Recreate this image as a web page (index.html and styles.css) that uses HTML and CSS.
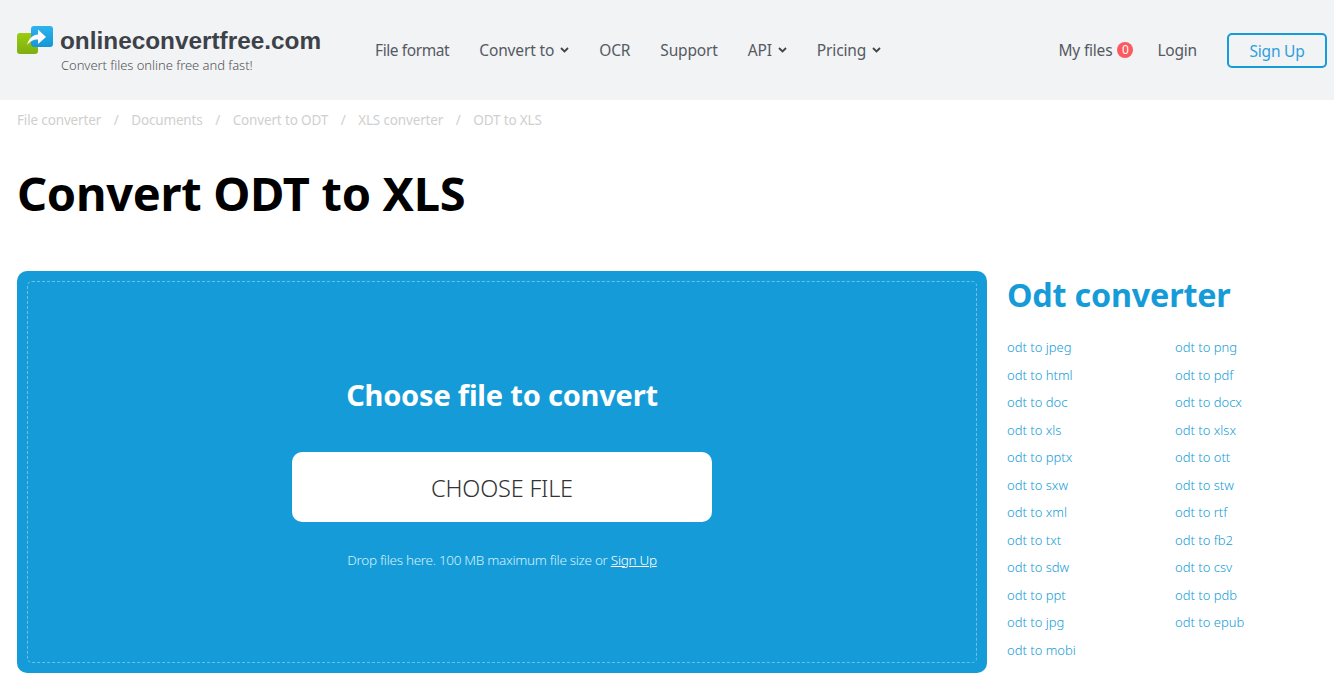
FILE: index.html
```html
<!DOCTYPE html>
<html lang="en">
<head>
<meta charset="utf-8">
<title>Convert ODT to XLS</title>
<link rel="stylesheet" href="styles.css">
</head>
<body>
<header class="header">
  <a class="brand" href="#">
    <svg class="logo" width="36" height="29" viewBox="0 0 36 29">
      <defs>
        <linearGradient id="g" x1="0" y1="0" x2="0" y2="1"><stop offset="0" stop-color="#9ccc10"/><stop offset="1" stop-color="#7fae12"/></linearGradient>
        <linearGradient id="b" x1="0" y1="0" x2="0" y2="1"><stop offset="0" stop-color="#2db4ee"/><stop offset="1" stop-color="#1496d6"/></linearGradient>
      </defs>
      <rect x="0" y="7" width="21" height="21" rx="3" fill="url(#g)"/>
      <rect x="14" y="0" width="22" height="21" rx="3" fill="url(#b)"/>
      <path d="M10 19 C12 12 16 9 21 8.5 V3.5 L29 11 L21 18 V13.5 C16 13.5 13 15.5 10 19 Z" fill="#fff"/>
    </svg>
    <span class="brand-text">
      <span class="brand-name">onlineconvertfree.com</span>
      <span class="brand-tag">Convert files online free and fast!</span>
    </span>
  </a>
  <nav class="nav">
    <a href="#">File format</a>
    <a href="#">Convert to <svg class="chev" width="9" height="6" viewBox="0 0 9 6"><path d="M1 1 4.5 4.5 8 1" fill="none" stroke="#444" stroke-width="1.8"/></svg></a>
    <a href="#">OCR</a>
    <a href="#">Support</a>
    <a href="#">API <svg class="chev" width="9" height="6" viewBox="0 0 9 6"><path d="M1 1 4.5 4.5 8 1" fill="none" stroke="#444" stroke-width="1.8"/></svg></a>
    <a href="#">Pricing <svg class="chev" width="9" height="6" viewBox="0 0 9 6"><path d="M1 1 4.5 4.5 8 1" fill="none" stroke="#444" stroke-width="1.8"/></svg></a>
  </nav>
  <div class="account">
    <a class="files" href="#">My files <span class="badge">0</span></a>
    <a href="#">Login</a>
    <a class="signup" href="#">Sign Up</a>
  </div>
</header>
<ol class="crumbs">
  <li>File converter</li><li>Documents</li><li>Convert to ODT</li><li>XLS converter</li><li>ODT to XLS</li>
</ol>
<h1 class="title">Convert ODT to XLS</h1>
<main class="main">
  <section class="drop">
    <div class="drop-inner">
      <h2 class="drop-title">Choose file to convert</h2>
      <button class="choose">CHOOSE FILE</button>
      <p class="drop-note">Drop files here. 100 MB maximum file size or <a href="#">Sign Up</a></p>
    </div>
  </section>
  <aside class="side">
    <h2 class="side-title">Odt converter</h2>
    <ul class="links">
      <li>odt to jpeg</li><li>odt to png</li>
      <li>odt to html</li><li>odt to pdf</li>
      <li>odt to doc</li><li>odt to docx</li>
      <li>odt to xls</li><li>odt to xlsx</li>
      <li>odt to pptx</li><li>odt to ott</li>
      <li>odt to sxw</li><li>odt to stw</li>
      <li>odt to xml</li><li>odt to rtf</li>
      <li>odt to txt</li><li>odt to fb2</li>
      <li>odt to sdw</li><li>odt to csv</li>
      <li>odt to ppt</li><li>odt to pdb</li>
      <li>odt to jpg</li><li>odt to epub</li>
      <li>odt to mobi</li>
    </ul>
  </aside>
</main>
</body>
</html>
```
FILE: styles.css
```css
* { box-sizing: border-box; }
html, body { margin: 0; padding: 0; }
body { height: 688px; overflow: hidden; background: #fff; font-family: "Noto Sans", "Open Sans", sans-serif; color: #555a62; }
a { color: inherit; text-decoration: none; }

.header { height: 100px; background: #f1f3f5; display: flex; align-items: center; padding: 0 7px 0 17px; }
.brand { display: flex; align-items: flex-start; width: 358px; flex: none; }
.logo { flex: none; margin-right: 7px; }
.brand-text { display: flex; flex-direction: column; }
.brand-name { font-family: "Liberation Sans", Arial, sans-serif; font-weight: 700; font-size: 24.35px; line-height: 30px; color: #3d4148; }
.brand-tag { font-size: 13px; font-weight: 300; line-height: 18px; color: #555; margin-top: 0; margin-left: 1px; letter-spacing: -0.05px; }

.nav { display: flex; gap: 30px; font-size: 15.5px; letter-spacing: -0.15px; }
.nav a { display: flex; align-items: center; gap: 6px; }
.nav a:first-child { letter-spacing: -0.4px; }

.account { margin-left: auto; display: flex; align-items: center; font-size: 15.5px; letter-spacing: -0.2px; }
.files { display: flex; align-items: center; gap: 5px; margin-right: 24px; }
.badge { width: 16px; height: 16px; border-radius: 50%; background: #fb5a5e; color: #fff; font-size: 12px; line-height: 16px; text-align: center; letter-spacing: 0; }
.signup { width: 100px; height: 35px; border: 2px solid #159cd8; border-radius: 5px; color: #2f9fdc; text-align: center; line-height: 33px; margin-left: 30px; }

.crumbs { list-style: none; margin: 0; padding: 11px 17px 0; display: flex; font-size: 13.5px; line-height: 18px; letter-spacing: -0.15px; color: #d0cfcf; }
.crumbs li + li::before { content: "/"; margin: 0 12.6px; }

.title { margin: 33px 0 0 17px; font-size: 47px; line-height: 62px; font-weight: 700; color: #000; letter-spacing: -0.3px; }

.main { display: flex; margin: 47px 0 0 17px; gap: 20px; align-items: flex-start; }
.drop { width: 970px; height: 402px; flex: none; background: #159cd8; border-radius: 10px; padding: 10px; }
.drop-inner { height: 100%; border: 1px dashed #6fc0e6; border-radius: 5px; display: flex; flex-direction: column; align-items: center; padding-top: 93px; color: #fff; }
.drop-title { margin: 0; font-size: 29px; line-height: 40px; font-weight: 700; letter-spacing: -0.2px; }
.choose { width: 420px; height: 70px; margin-top: 37px; padding: 1px 0 0; border: 0; border-radius: 10px; background: #fff; font-family: inherit; font-size: 23.5px; font-weight: 300; color: #333; letter-spacing: -0.2px; }
.drop-note { margin: 28px 0 0; font-size: 13.5px; line-height: 20px; font-weight: 300; color: #d4f0fc; letter-spacing: -0.3px; }
.drop-note a { text-decoration: underline; color: #fff; }

.side { flex: 1; }
.side-title { margin: 0; font-size: 32.3px; line-height: 46px; font-weight: 700; color: #159cd8; letter-spacing: -0.2px; }
.links { list-style: none; margin: 17px 0 0; padding: 0; display: grid; grid-template-columns: 168px 168px; grid-auto-rows: 27.5px; font-size: 13px; line-height: 27.5px; font-weight: 300; color: #159cd8; letter-spacing: 0; }
```
